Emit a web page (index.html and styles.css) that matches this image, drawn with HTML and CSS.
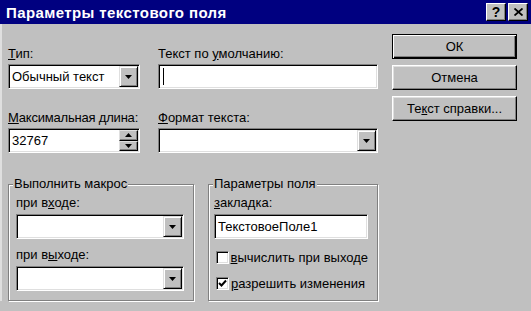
FILE: index.html
```html
<!DOCTYPE html>
<html lang="ru">
<head>
    <meta charset="UTF-8">
    <title>Параметры текстового поля</title>
    <link rel="stylesheet" href="styles.css">
</head>
<body>
    <div class="dialog">
        <div class="titlebar">
            <span class="title">Параметры текстового поля</span>
            <div class="title-buttons">
                <span class="tbtn help">?</span>
                <span class="tbtn close">
                    <svg width="9" height="8" viewBox="0 0 9 8"><path d="M0.5 0.5 L8.5 7.5 M8.5 0.5 L0.5 7.5" stroke="#000" stroke-width="1.8"/></svg>
                </span>
            </div>
        </div>

        <div class="body">
            <div class="main">
                <div class="fields">
                    <div class="field">
                        <label><u>Т</u>ип:</label>
                        <div class="box combo">
                            <span class="value">Обычный текст</span>
                            <span class="drop"><svg width="7" height="4" viewBox="0 0 7 4"><path d="M0 0 H7 L3.5 4 Z"/></svg></span>
                        </div>
                    </div>
                    <div class="field">
                        <label>Текст по <u>у</u>молчанию:</label>
                        <div class="box"><span class="caret"></span></div>
                    </div>
                    <div class="field">
                        <label class="tight"><u>М</u>аксимальная длина:</label>
                        <div class="box combo">
                            <span class="value">32767</span>
                            <span class="spin">
                                <span class="spin-btn"><svg width="7" height="4" viewBox="0 0 7 4"><path d="M0 4 H7 L3.5 0 Z"/></svg></span>
                                <span class="spin-btn"><svg width="7" height="4" viewBox="0 0 7 4"><path d="M0 0 H7 L3.5 4 Z"/></svg></span>
                            </span>
                        </div>
                    </div>
                    <div class="field">
                        <label><u>Ф</u>ормат текста:</label>
                        <div class="box combo">
                            <span class="value"></span>
                            <span class="drop"><svg width="7" height="4" viewBox="0 0 7 4"><path d="M0 0 H7 L3.5 4 Z"/></svg></span>
                        </div>
                    </div>
                </div>

                <div class="groups">
                    <fieldset class="group macro">
                        <legend>Выполнить макрос</legend>
                        <label>при в<u>х</u>оде:</label>
                        <div class="box combo">
                            <span class="value"></span>
                            <span class="drop"><svg width="7" height="4" viewBox="0 0 7 4"><path d="M0 0 H7 L3.5 4 Z"/></svg></span>
                        </div>
                        <label class="second">при в<u>ы</u>ходе:</label>
                        <div class="box combo">
                            <span class="value"></span>
                            <span class="drop"><svg width="7" height="4" viewBox="0 0 7 4"><path d="M0 0 H7 L3.5 4 Z"/></svg></span>
                        </div>
                    </fieldset>

                    <fieldset class="group params">
                        <legend>Параметры поля</legend>
                        <label><u>з</u>акладка:</label>
                        <div class="box"><span class="value">ТекстовоеПоле1</span></div>
                        <div class="check-row">
                            <span class="checkbox"></span>
                            <span><u>в</u>ычислить при выходе</span>
                        </div>
                        <div class="check-row">
                            <span class="checkbox">
                                <svg width="9" height="9" viewBox="0 0 9 9"><path d="M1 4 L3.5 6.5 L8 1.5" fill="none" stroke="#000" stroke-width="2"/></svg>
                            </span>
                            <span><u>р</u>азрешить изменения</span>
                        </div>
                    </fieldset>
                </div>
            </div>

            <div class="buttons">
                <div class="btn default"><span>ОК</span></div>
                <div class="btn"><span>Отмена</span></div>
                <div class="btn"><span>Те<u>к</u>ст справки...</span></div>
            </div>
        </div>
    </div>
</body>
</html>
```

FILE: styles.css
```css
body {
    margin: 0;
    background: #c0c0c0;
    font-family: "Liberation Sans", Arial, sans-serif;
    font-size: 13px;
    color: #000;
}

.dialog {
    width: 531px;
    height: 311px;
    background: #c0c0c0;
    overflow: hidden;
}

/* title bar */
.titlebar {
    height: 24px;
    background: #000080;
    display: flex;
    align-items: center;
    justify-content: space-between;
    padding: 0 3px 0 6px;
}

.title {
    color: #fff;
    font-weight: bold;
    font-size: 15px;
    letter-spacing: 0.4px;
}

.title-buttons {
    display: flex;
    gap: 2px;
}

.tbtn {
    width: 20px;
    height: 18px;
    box-sizing: border-box;
    background: #c0c0c0;
    border: 1px solid;
    border-color: #fff #000 #000 #fff;
    box-shadow: inset -1px -1px #808080;
    display: flex;
    align-items: center;
    justify-content: center;
    font-weight: bold;
    font-size: 14px;
}

/* dialog body */
.body {
    display: flex;
    padding: 10px 14px 0 8px;
    box-shadow: inset 2px 0 #dfdfdf;
}

.main {
    width: 370px;
    padding-top: 12px;
}

label {
    display: block;
    height: 16px;
    line-height: 16px;
    margin-bottom: 2px;
    white-space: nowrap;
}

label.tight {
    letter-spacing: -0.2px;
}

.fields {
    display: grid;
    grid-template-columns: 132px 220px;
    column-gap: 18px;
    row-gap: 21px;
}

/* sunken field */
.box {
    height: 25px;
    box-sizing: border-box;
    background: #fff;
    border: 1px solid;
    border-color: #808080 #fff #fff #808080;
    box-shadow: inset 1px 1px #000, inset -1px -1px #dfdfdf;
    padding: 1px;
    display: flex;
    align-items: stretch;
}

.value {
    flex: 1;
    padding-left: 2px;
    line-height: 21px;
    white-space: nowrap;
}

.caret {
    width: 1px;
    margin: 2px 0 2px 3px;
    background: #000;
}

.drop {
    width: 19px;
    box-sizing: border-box;
    background: #c0c0c0;
    border: 1px solid;
    border-color: #dfdfdf #000 #000 #dfdfdf;
    box-shadow: inset 1px 1px #fff, inset -1px -1px #808080;
    display: flex;
    align-items: center;
    justify-content: center;
}

.spin {
    width: 19px;
    display: flex;
    flex-direction: column;
}

.spin-btn {
    flex: 1;
    box-sizing: border-box;
    background: #c0c0c0;
    border: 1px solid;
    border-color: #dfdfdf #000 #000 #dfdfdf;
    box-shadow: inset -1px -1px #808080;
    display: flex;
    align-items: center;
    justify-content: center;
}

/* group boxes */
.groups {
    display: flex;
    margin-top: 23px;
}

.group {
    margin: 0;
    box-sizing: border-box;
    min-width: 0;
    border: 1px solid #808080;
    box-shadow: inset 1px 1px #fff, 1px 1px #fff;
    padding: 3px 9px 9px 7px;
}

.group legend {
    padding: 0 1px;
    line-height: 16px;
    background: #c0c0c0;
}

.macro {
    width: 186px;
}

.macro legend {
    margin-left: -3px;
}

.macro label {
    margin-bottom: 3px;
}

.macro label.second {
    margin-top: 8px;
}

.params {
    width: 170px;
    margin-left: 14px;
    padding-left: 5px;
}

.params legend {
    margin-left: -1px;
}

.params label {
    margin-bottom: 3px;
}

.check-row {
    display: flex;
    align-items: center;
    height: 16px;
    margin-top: 10px;
    gap: 2px;
    white-space: nowrap;
}

.checkbox {
    width: 13px;
    height: 13px;
    margin-left: 2px;
    box-sizing: border-box;
    background: #fff;
    border: 1px solid;
    border-color: #808080 #fff #fff #808080;
    box-shadow: inset 1px 1px #000, inset -1px -1px #dfdfdf;
    display: flex;
    align-items: center;
    justify-content: center;
}

/* command buttons */
.buttons {
    width: 125px;
    margin-left: 14px;
    display: flex;
    flex-direction: column;
    gap: 6px;
}

.btn {
    height: 25px;
    box-sizing: border-box;
    background: #c0c0c0;
    border: 1px solid;
    border-color: #fff #000 #000 #fff;
    box-shadow: inset -1px -1px #808080, inset 1px 1px #dfdfdf;
    display: flex;
    align-items: center;
    justify-content: center;
}

.btn.default {
    border: 1px solid #000;
    box-shadow: inset 1px 1px #fff, inset -1px -1px #000, inset -2px -2px #808080;
}
```
